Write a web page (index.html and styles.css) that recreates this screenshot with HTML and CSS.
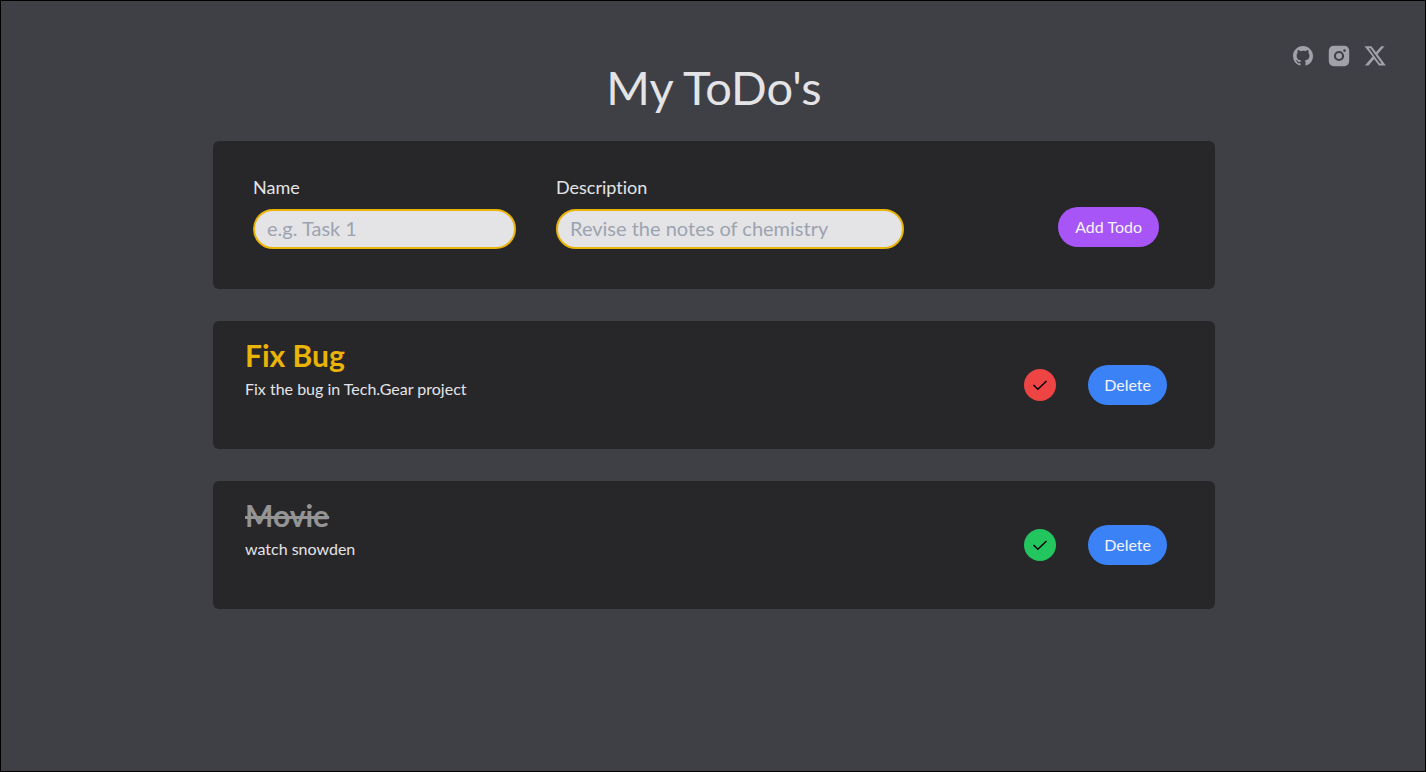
FILE: index.html
```html
<!DOCTYPE html>
<html lang="en">
<head>
<meta charset="utf-8">
<meta name="viewport" content="width=device-width, initial-scale=1">
<title>My ToDo's</title>
<link rel="stylesheet" href="styles.css">
</head>
<body>
<nav class="social" aria-label="Social links">
  <a href="#" aria-label="GitHub"><svg viewBox="0 0 24 24"><path d="M12 2C6.475 2 2 6.475 2 12a9.994 9.994 0 0 0 6.838 9.488c.5.087.687-.213.687-.476 0-.237-.013-1.024-.013-1.862-2.512.463-3.162-.612-3.362-1.175-.113-.288-.6-1.175-1.025-1.413-.35-.187-.85-.65-.013-.662.788-.013 1.35.725 1.538 1.025.9 1.512 2.338 1.087 2.912.825.088-.65.35-1.087.638-1.337-2.225-.25-4.55-1.113-4.55-4.938 0-1.088.387-1.987 1.025-2.688-.1-.25-.45-1.275.1-2.65 0 0 .837-.262 2.75 1.026a9.28 9.28 0 0 1 2.5-.338c.85 0 1.7.112 2.5.337 1.912-1.3 2.75-1.024 2.75-1.024.55 1.375.2 2.4.1 2.65.637.7 1.025 1.587 1.025 2.687 0 3.838-2.337 4.688-4.562 4.938.362.312.675.912.675 1.85 0 1.337-.013 2.412-.013 2.75 0 .262.188.574.688.474A10.016 10.016 0 0 0 22 12c0-5.525-4.475-10-10-10z"/></svg></a>
  <a href="#" aria-label="Instagram"><svg viewBox="0 0 24 24"><path fill-rule="evenodd" d="M7 1.700h10a5 5 0 0 1 5.200 5v10.300a5 5 0 0 1-5.200 5.200H7a5 5 0 0 1-5.200-5.200V6.700a5 5 0 0 1 5.200-5zm5 5.200a5.100 5.100 0 1 0 0 10.200 5.100 5.100 0 0 0 0-10.200zm0 2.100a3 3 0 1 1 0 6 3 3 0 0 1 0-6zm5.500-3.700a1.300 1.300 0 1 0 0 2.600 1.300 1.300 0 0 0 0-2.600z"/></svg></a>
  <a href="#" aria-label="X"><svg viewBox="0 0 24 24"><path fill-rule="evenodd" d="M1.500 2.200h7l4.500 6 5.200-6h3.300l-7 8.100 8.300 11.200h-6.900l-4.800-6.500-5.600 6.500H1.900l7.700-8.900zm4.200 2 11 15.300h1.900L7.500 4.200z"/></svg></a>
</nav>
<main class="page">
  <h1 class="title">My ToDo's</h1>
  <form class="card form">
    <div class="field">
      <label for="name">Name</label>
      <input id="name" type="text" placeholder="e.g. Task 1">
    </div>
    <div class="field">
      <label for="description">Description</label>
      <input id="description" type="text" placeholder="Revise the notes of chemistry">
    </div>
    <button class="button add" type="button">Add Todo</button>
  </form>
  <article class="card todo">
    <div class="text">
      <h2 class="name">Fix Bug</h2>
      <p class="detail">Fix the bug in Tech.Gear project</p>
    </div>
    <div class="actions">
      <button class="check" type="button" aria-label="Mark Fix Bug as done"><svg viewBox="0 0 16 16"><path d="M1.500 8l4.300 4.200 8.700-8.200"/></svg></button>
      <button class="button delete" type="button">Delete</button>
    </div>
  </article>
  <article class="card todo">
    <div class="text">
      <h2 class="name done">Movie</h2>
      <p class="detail">watch snowden</p>
    </div>
    <div class="actions">
      <button class="check checked" type="button" aria-label="Mark Movie as not done"><svg viewBox="0 0 16 16"><path d="M1.500 8l4.300 4.200 8.700-8.200"/></svg></button>
      <button class="button delete" type="button">Delete</button>
    </div>
  </article>
</main>
</body>
</html>
```
FILE: styles.css
```css
* {
  box-sizing: border-box;
}

body {
  position: relative;
  margin: 0;
  min-height: 100vh;
  border: 1px solid #000;
  background: #3f3f46;
  color: #e4e4e7;
  font: 16px/24px Lato, "Open Sans", sans-serif;
  font-variant-ligatures: none;
}

button,
input {
  font: inherit;
}

.social {
  position: absolute;
  top: 43px;
  right: 38px;
  display: flex;
  gap: 12px;
}

.social svg {
  display: block;
  width: 24px;
  height: 24px;
  fill: #a1a1aa;
}

.page {
  display: flex;
  flex-direction: column;
  gap: 32px;
  margin: 0 210px 0 212px;
  padding: 62px 0 32px;
}

.title {
  margin: 0 0 -2px;
  font-size: 47px;
  line-height: 48px;
  font-weight: 400;
  text-align: center;
}

.card {
  border-radius: 6px;
  background: #27272a;
}

.form {
  display: grid;
  grid-template-columns: 263fr 348fr 231fr;
  gap: 40px;
  padding: 32px 40px 40px;
}

.field {
  display: flex;
  flex-direction: column;
  gap: 8px;
  min-width: 0;
  font-size: 18px;
  line-height: 28px;
}

.field input {
  width: 100%;
  height: 40px;
  padding: 0 12px 2px;
  border: 2px solid #eab308;
  border-radius: 20px;
  background: #e4e4e7;
  color: #27272a;
  font-size: 20px;
}

.field input::placeholder {
  color: #9ca3af;
  opacity: 1;
}

.button {
  height: 40px;
  padding: 0 16px;
  border: 0;
  border-radius: 20px;
  color: #f4f4f5;
}

.add {
  align-self: end;
  justify-self: end;
  margin: 0 16px 2px 0;
  padding: 0 17px;
  background: #a855f7;
}

.todo {
  display: flex;
  justify-content: space-between;
  align-items: center;
  min-height: 128px;
  padding: 16px 48px 16px 32px;
}

.text {
  align-self: flex-start;
}

.name {
  margin: 0;
  color: #eab308;
  font-size: 30px;
  line-height: 36px;
  font-weight: 700;
}

.done {
  color: #949494;
  text-decoration: line-through;
}

.detail {
  margin: 4px 0 0;
}

.actions {
  display: flex;
  align-items: center;
  gap: 32px;
}

.check {
  display: grid;
  place-items: center;
  width: 32px;
  height: 32px;
  padding: 0;
  border: 0;
  border-radius: 50%;
  background: #ef4444;
}

.checked {
  background: #22c55e;
}

.check svg {
  width: 16px;
  height: 16px;
  fill: none;
  stroke: #000;
  stroke-width: 1.5;
}

.delete {
  background: #3b82f6;
}

@media (max-width: 1100px) {
  .page {
    margin: 0 24px;
  }

  .form {
    gap: 20px;
  }
}

@media (max-width: 720px) {
  .form {
    grid-template-columns: 1fr;
  }
}
```
